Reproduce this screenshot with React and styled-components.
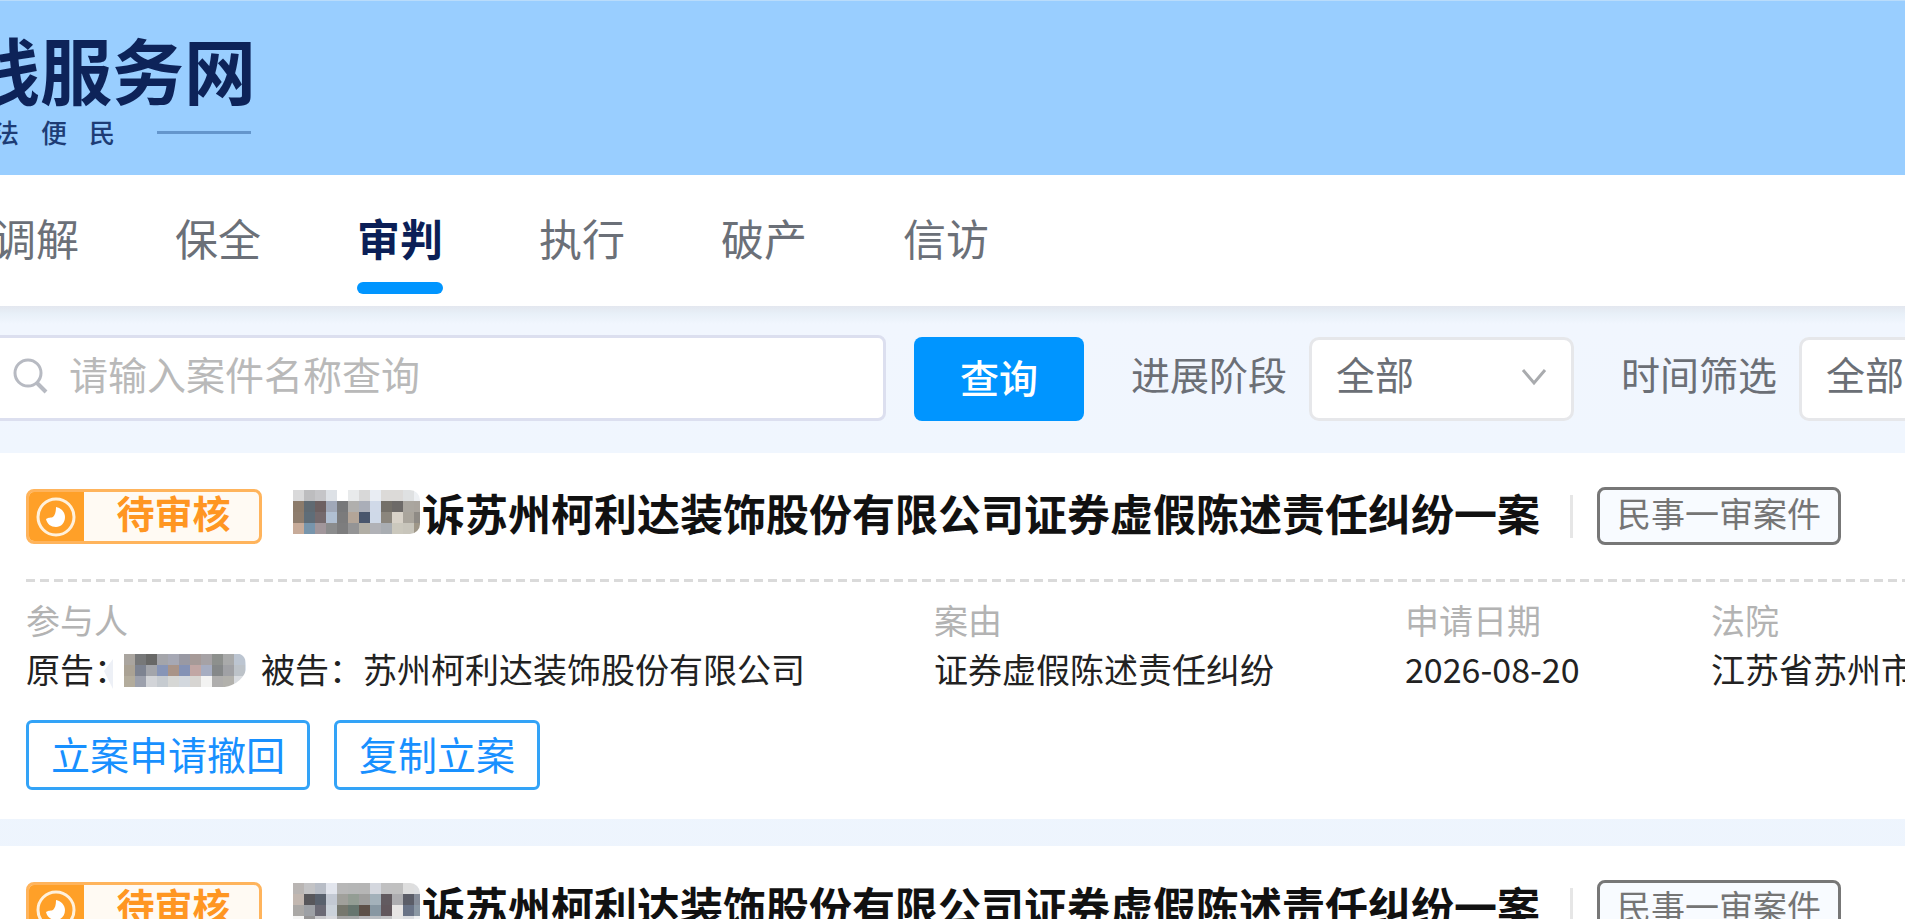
import React from "react";
import styled, { createGlobalStyle } from "styled-components";

const GlobalStyle = createGlobalStyle`
  * { box-sizing: border-box; }
  body {
    margin: 0;
    overflow: hidden;
    background: #f0f6fe;
    font-family: "Noto Sans CJK SC", "Noto Sans", sans-serif;
  }
  button, input, select { font-family: inherit; }
`;

const Page = styled.div`
  height: 100vh;
  overflow: hidden;
  white-space: nowrap;
`;

const Header = styled.header`
  height: 175px;
  padding-top: 18px;
  border-top: 1px solid #b9dcfb;
  background: #99ceff;
  color: #0d2359;
`;

const SiteName = styled.h1`
  margin: 0 0 0 -32px;
  font-size: 72px;
  line-height: 98px;
  font-weight: 700;
`;

const Motto = styled.div`
  display: flex;
  align-items: center;
  gap: 22px;
  margin: 2px 0 0 -7px;
  font-size: 26px;
  line-height: 26px;
  font-weight: 500;
  color: #1d3c75;
`;

const MottoRule = styled.span`
  width: 94px;
  height: 3px;
  margin-left: 20px;
  background: #6496cc;
`;

const Nav = styled.nav`
  display: flex;
  gap: 96px;
  height: 131px;
  padding-top: 30px;
  margin-left: -7px;
  background: #fff;
`;

const Tab = styled.a`
  display: flex;
  flex-direction: column;
  gap: 13px;
  font-size: 43px;
  line-height: 64px;
  text-decoration: none;
  font-weight: ${(p) => (p.$active ? 700 : 400)};
  color: ${(p) => (p.$active ? "#0b1f57" : "#6b7078")};

  &::after {
    content: "";
    height: 12px;
    border-radius: 6px;
    background: ${(p) => (p.$active ? "#0095ff" : "transparent")};
  }
`;

const Filters = styled.form`
  display: flex;
  align-items: flex-end;
  height: 147px;
  padding-bottom: 32px;
  margin: 0 -159px 0 -10px;
  background: linear-gradient(#e3e7ef, #e8f0f8 8px, #f1f6fe 18px, #f0f6fe);
`;

const SearchBox = styled.label`
  flex: 1;
  display: flex;
  align-items: center;
  height: 86px;
  padding: 0 0 4px 20px;
  border: 3px solid #dcdfef;
  border-radius: 8px;
  background: #fff;
`;

const SearchInput = styled.input`
  flex: 1;
  min-width: 0;
  height: 68px;
  margin: 0 0 6px 20px;
  padding: 0;
  border: 0;
  outline: 0;
  background: transparent;
  font-size: 39px;
  color: #666;

  &::placeholder { color: #b9b9b9; opacity: 1; }
`;

const SearchButton = styled.button`
  width: 170px;
  height: 84px;
  margin: 0 47px 0 28px;
  padding: 0 0 6px;
  border: 0;
  border-radius: 8px;
  background: #0095ff;
  color: #fff;
  font-size: 39px;
  font-weight: 500;
`;

const Field = styled.label`
  display: flex;
  align-items: center;
  gap: 22px;
  height: 84px;
  font-size: 39px;
  color: #6b6f76;

  & + & { margin-left: 47px; }
`;

const FieldName = styled.span`
  padding-bottom: 12px;
`;

const SelectBox = styled.span`
  display: grid;
  align-items: center;
  width: 265px;
  height: 84px;

  & > * { grid-area: 1 / 1; }
  & > svg { justify-self: end; margin: 0 26px 4px 0; pointer-events: none; }
`;

const Select = styled.select`
  appearance: none;
  width: 100%;
  height: 100%;
  padding: 0 60px 12px 24px;
  border: 3px solid #e6e7ea;
  border-radius: 10px;
  background: #fff;
  color: #6b6f76;
  font-size: 39px;
`;

const CaseList = styled.main`
  display: flex;
  flex-direction: column;
  gap: 27px;
  background: linear-gradient(#f0f6fe, #edf4fd);
`;

const Card = styled.article`
  padding: 34px 0 29px 26px;
  background: #fff;
`;

const CardHead = styled.div`
  display: flex;
  align-items: center;
  height: 58px;
`;

const Status = styled.span`
  display: flex;
  width: 236px;
  height: 55px;
  border: 3px solid #ffb45c;
  border-radius: 8px;
  background: #fffaf3;
  overflow: hidden;
`;

const StatusIcon = styled.span`
  display: flex;
  align-items: center;
  justify-content: center;
  width: 55px;
  background: #ffa028;
`;

const StatusText = styled.span`
  flex: 1;
  padding-left: 4px;
  text-align: center;
  font-size: 38px;
  line-height: 40px;
  font-weight: 700;
  color: #ff9622;
`;

const CaseTitle = styled.h2`
  display: flex;
  align-items: center;
  margin: 0 30px 0 31px;
  font-size: 43px;
  line-height: 54px;
  font-weight: 700;
  color: #111;

  & > svg { margin: 0 0 8px; }
`;

const TitleText = styled.span`
  padding-bottom: 8px;
`;

const CaseType = styled.span`
  display: flex;
  align-items: center;
  gap: 24px;

  &::before {
    content: "";
    width: 3px;
    height: 43px;
    background: #e6e6e6;
  }
`;

const TypeTag = styled.span`
  height: 58px;
  padding: 0 17px;
  border: 3px solid #777;
  border-radius: 8px;
  background: #f8fbff;
  font-size: 34px;
  line-height: 46px;
  color: #757575;
`;

const Divider = styled.div`
  height: 3px;
  margin: 34px 0 13px;
  background: repeating-linear-gradient(90deg, #dadada 0 9px, transparent 9px 14px);
`;

const Details = styled.dl`
  display: grid;
  grid-template-columns: 908fr 471fr 306fr 194fr;
  margin: 0;
  font-size: 34px;
  line-height: 49px;
`;

const Detail = styled.div`
  min-width: 0;
`;

const Term = styled.dt`
  color: #b3b3b3;
`;

const Value = styled.dd`
  display: flex;
  align-items: center;
  margin: 0;
  color: #222;

  & > svg { flex: none; margin: 6px 11px 0 -27px; }
`;

const Actions = styled.div`
  display: flex;
  gap: 24px;
  margin-top: 27px;
`;

const ActionButton = styled.button`
  height: 70px;
  padding: 0 22px 4px;
  border: 3px solid #33a3f7;
  border-radius: 6px;
  background: #fff;
  color: #1890ff;
  font-size: 39px;
  line-height: 58px;
`;

const TITLE_BLUR = [
  ["#d9d9da", "#bdbdbf", "#c5c5c8", "#dde1e6", "#ffffff", "#e8eaeb", "#d8d8d8", "#e9edf3", "#dcdad8", "#dcdad8", "#dfe1e2", "#edf0f3"],
  ["#8c7b6b", "#606a72", "#6d6061", "#a0a8b8", "#77787a", "#b0afad", "#aaaeb8", "#d0d9e8", "#747069", "#6d6a68", "#aaa69f", "#a9a49d"],
  ["#8e7d6e", "#5f6d78", "#756a6d", "#b0bfd2", "#7b7b7c", "#b3a598", "#49566c", "#cfd9e8", "#8b867d", "#d8d2c8", "#aaa59c", "#8f8b85"],
  ["#c7ab99", "#7795ac", "#a1969b", "#8b8c8d", "#7d7d7e", "#949495", "#b1aea5", "#b1b2b7", "#a9adb2", "#cbc8bd", "#c8c5bb", "#9f9788"],
];

const SECOND_BLUR = [
  ["#b9b5b3", "#c3c3c5", "#b8bdc6", "#e2e5ed", "#b7b7b7", "#b5b6b6", "#b5b5b5", "#d4d7de", "#c0c0c1", "#c0c0c0", "#dedede", "#dedfe1"],
  ["#c2b7b0", "#58575b", "#59616d", "#c3c9d3", "#a0a09b", "#939d94", "#9e9e9d", "#a3b1ba", "#625b60", "#adadb0", "#5b5d67", "#858c98"],
  ["#aaa8a6", "#9da0a5", "#6b6a75", "#cbd2da", "#76776d", "#66756e", "#5d5048", "#8797a2", "#62585d", "#e7e5e4", "#697386", "#8b98a4"],
  ["#f4f4f4", "#969596", "#c8c8cb", "#d7d8dc", "#a4a4a4", "#a4a6a6", "#b5b5b8", "#b9bdc1", "#c2c3c5", "#e5e5e5", "#dbdde0", "#eef0f2"],
];

const PARTY_BLUR = [
  ["#aaa59f", "#777879", "#686867", "#a4a5aa", "#a6a8b4", "#9999a3", "#a69a98", "#a6a2a5", "#8d908d", "#a9aaaa", "#bcc5d1", "#dce3eb"],
  ["#aaa294", "#7d8391", "#a3a5ab", "#8795b7", "#a99488", "#8492b5", "#c1a6a4", "#a6adc1", "#858889", "#a0a1a5", "#bcc2c8", "#d8e0ea"],
  ["#b3ac9c", "#9ca0ac", "#d2d4d8", "#c6cbd0", "#d6d7d5", "#d3d8de", "#d7d5d2", "#f3f3f2", "#afaead", "#b2b1ac", "#d8dbdf", "#f1f4f8"],
];

function Redacted({ cells, width, radius }) {
  const id = React.useId();
  const height = cells.length * 11;
  return (
    <svg width={width} height={height} viewBox={`0 0 ${width} ${height}`} aria-hidden="true">
      <clipPath id={id}>
        <rect x="-20" width={width + 18} height={height} rx={radius} />
      </clipPath>
      <g clipPath={`url(#${id})`} shapeRendering="crispEdges">
        {cells.map((row, y) =>
          row.map((fill, x) => (
            <rect key={`${x}-${y}`} x={x * 11} y={y * 11} width="11" height="11" fill={fill} />
          ))
        )}
      </g>
    </svg>
  );
}

function PartyName() {
  return (
    <svg width="149" height="38" viewBox="0 0 149 38" aria-hidden="true">
      <path d="M3 18 12 6v30Z" fill="#edf0f6" />
      <clipPath id="party-name">
        <path d="M23 0h110q12 0 12 12v5q-5 16-28 18H23Z" />
      </clipPath>
      <g clipPath="url(#party-name)" shapeRendering="crispEdges">
        {PARTY_BLUR.map((row, y) =>
          row.map((fill, x) => (
            <rect key={`${x}-${y}`} x={23 + x * 11} y={1 + y * 11} width="11" height="11" fill={fill} />
          ))
        )}
      </g>
    </svg>
  );
}

function SearchIcon() {
  return (
    <svg width="36" height="36" viewBox="0 0 36 36" fill="none" stroke="#b7bac2" strokeWidth="3" aria-hidden="true">
      <ellipse cx="15" cy="15" rx="13" ry="13" />
      <path d="m24 25 9 9" strokeWidth="4" />
    </svg>
  );
}

function Chevron() {
  return (
    <svg width="28" height="20" viewBox="0 0 28 20" fill="none" stroke="#a9abae" strokeWidth="3" aria-hidden="true">
      <path d="m3 3 11 13L25 3" />
    </svg>
  );
}

function PendingIcon() {
  return (
    <svg width="44" height="50" viewBox="0 0 44 50" aria-hidden="true">
      <circle cx="21" cy="26" r="18" fill="none" stroke="#fff1dc" strokeWidth="3" />
      <path d="M21 16c0 5-1 8-3 10-2 1-4 0-7 2 1 5 5 8 10 8 5 0 9-4 9-10 0-5-4-9-9-10Z" fill="#fff" />
    </svg>
  );
}

const TABS = ["调解", "保全", "审判", "执行", "破产", "信访"];

function FilterField({ name }) {
  return (
    <Field>
      <FieldName>{name}</FieldName>
      <SelectBox>
        <Select defaultValue="全部">
          <option>全部</option>
        </Select>
        <Chevron />
      </SelectBox>
    </Field>
  );
}

function CaseHeading({ cells }) {
  return (
    <CardHead>
      <Status>
        <StatusIcon>
          <PendingIcon />
        </StatusIcon>
        <StatusText>待审核</StatusText>
      </Status>
      <CaseTitle>
        <Redacted cells={cells} width={129} radius={10} />
        <TitleText>诉苏州柯利达装饰股份有限公司证券虚假陈述责任纠纷一案</TitleText>
      </CaseTitle>
      <CaseType>
        <TypeTag>民事一审案件</TypeTag>
      </CaseType>
    </CardHead>
  );
}

export default function App() {
  return (
    <Page>
      <GlobalStyle />
      <Header>
        <SiteName>线服务网</SiteName>
        <Motto>
          <span>法</span>
          <span>便</span>
          <span>民</span>
          <MottoRule />
        </Motto>
      </Header>
      <Nav>
        {TABS.map((tab) => (
          <Tab key={tab} href="#" $active={tab === "审判"}>
            {tab}
          </Tab>
        ))}
      </Nav>
      <Filters onSubmit={(e) => e.preventDefault()}>
        <SearchBox>
          <SearchIcon />
          <SearchInput aria-label="案件名称" placeholder="请输入案件名称查询" />
        </SearchBox>
        <SearchButton>查询</SearchButton>
        <FilterField name="进展阶段" />
        <FilterField name="时间筛选" />
      </Filters>
      <CaseList>
        <Card>
          <CaseHeading cells={TITLE_BLUR} />
          <Divider />
          <Details>
            <Detail>
              <Term>参与人</Term>
              <Value>
                原告：
                <PartyName />
                被告：苏州柯利达装饰股份有限公司
              </Value>
            </Detail>
            <Detail>
              <Term>案由</Term>
              <Value>证券虚假陈述责任纠纷</Value>
            </Detail>
            <Detail>
              <Term>申请日期</Term>
              <Value>2026-08-20</Value>
            </Detail>
            <Detail>
              <Term>法院</Term>
              <Value>江苏省苏州市</Value>
            </Detail>
          </Details>
          <Actions>
            <ActionButton>立案申请撤回</ActionButton>
            <ActionButton>复制立案</ActionButton>
          </Actions>
        </Card>
        <Card>
          <CaseHeading cells={SECOND_BLUR} />
        </Card>
      </CaseList>
    </Page>
  );
}
